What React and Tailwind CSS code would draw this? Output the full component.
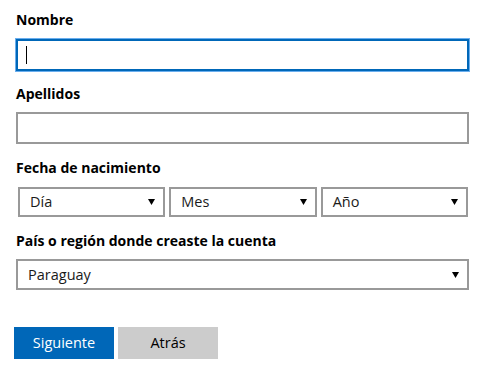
import React from "react";

function Arrow() {
  return (
    <svg width="7" height="6" viewBox="0 0 7 6" className="shrink-0">
      <path d="M0 0 H7 L3.5 6 Z" fill="#000" />
    </svg>
  );
}

function Select({ label, className = "" }) {
  return (
    <div className={"flex items-center justify-between border-2 border-[#999999] bg-white pl-[10px] pr-[8px] " + className}>
      <span className="text-[14.5px] text-[#1a1a1a]">{label}</span>
      <Arrow />
    </div>
  );
}

export default function App() {
  return (
    <div className="w-[485px] h-[382px] bg-white pt-[10px] pl-[16px]" style={{ fontFamily: '"Open Sans", "Noto Sans", sans-serif' }}>
      <div className="w-[453px]">
        <div className="h-[20px] leading-[20px] text-[14px] font-bold text-black mb-[9px]">Nombre</div>
        <div className="h-[32px] border-2 border-[#0067b8] shadow-[0_0_0_1px_#6aaeee] flex items-center pl-[8px]">
          <div className="w-px h-[18px] bg-black" />
        </div>
        <div className="h-[20px] leading-[20px] text-[14px] font-bold text-black mt-[13px] mb-[8px]">Apellidos</div>
        <div className="h-[32px] border-2 border-[#999999]" />
        <div className="h-[20px] leading-[20px] text-[14px] font-bold text-black mt-[14px] mb-[9px]">Fecha de nacimiento</div>
        <div className="ml-[2px] w-[450px] grid grid-cols-3 gap-[4px]">
          <Select label="Día" className="h-[30px]" />
          <Select label="Mes" className="h-[30px]" />
          <Select label="Año" className="h-[30px]" />
        </div>
        <div className="h-[20px] leading-[20px] text-[14px] font-bold text-black mt-[14px] mb-[8px]">País o región donde creaste la cuenta</div>
        <Select label="Paraguay" className="h-[31px]" />
        <div className="mt-[37px] -ml-[2px] flex gap-[4px]">
          <button className="w-[100px] h-[32px] bg-[#0067b8] text-white text-[14.5px]">Siguiente</button>
          <button className="w-[100px] h-[32px] bg-[#cccccc] text-black text-[14.5px]">Atrás</button>
        </div>
      </div>
    </div>
  );
}
